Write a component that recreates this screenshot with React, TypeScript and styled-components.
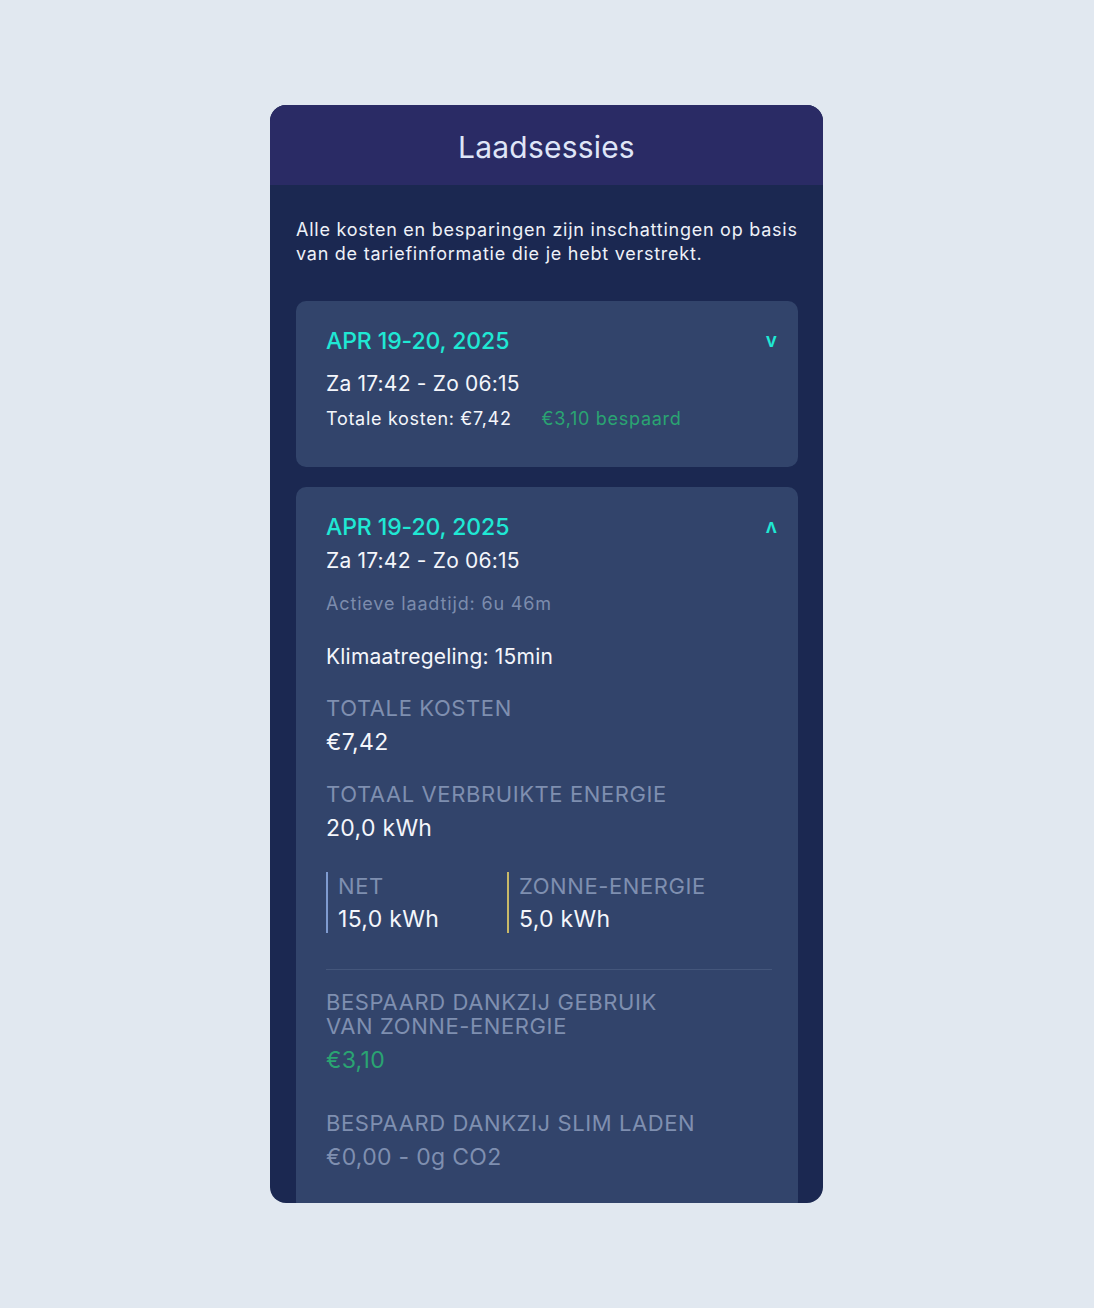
import React from "react";
import styled, { createGlobalStyle } from "styled-components";

const Global = createGlobalStyle`
  html, body { margin: 0; padding: 0; background: #e1e8f0; }
  body { font-family: Inter, "Noto Sans", "Liberation Sans", sans-serif; -webkit-font-smoothing: antialiased; }
  * { box-sizing: border-box; }
`;

const Page = styled.div`
  min-height: 1308px;
  display: flex;
  justify-content: flex-start;
  padding: 105px 0 0 270px;
`;

const Panel = styled.div`
  width: 553px;
  height: 1098px;
  border-radius: 16px;
  overflow: hidden;
  background: #1b2851;
  display: flex;
  flex-direction: column;
`;

const Header = styled.div`
  height: 80px;
  flex: none;
  background: #2a2b65;
  display: flex;
  align-items: center;
  justify-content: center;
  color: #dfe5f7;
  font-size: 30px;
  font-weight: 400;
  letter-spacing: 0.2px;
  padding-top: 4px;
`;

const Body = styled.div`
  padding: 33px 25px 0 26px;
  display: flex;
  flex-direction: column;
  gap: 20px;
`;

const Intro = styled.p`
  margin: 0 0 15px;
  color: #eef1f8;
  font-size: 18px;
  line-height: 24px;
  letter-spacing: 0.75px;
`;

const Card = styled.div<{ $open?: boolean }>`
  background: #32446b;
  border-radius: 10px;
  padding: ${(p) => (p.$open ? "26px 20px 40px 30px" : "26px 20px 36px 30px")};
  display: flex;
  flex-direction: column;
`;

const TopRow = styled.div`
  display: flex;
  justify-content: space-between;
  align-items: center;
`;

const DateText = styled.div`
  color: #1fe8d4;
  font-size: 23px;
  line-height: 28px;
  font-weight: 500;
  letter-spacing: -0.1px;
`;

const Chevron = styled.span`
  color: #1fe8d4;
  font-size: 19px;
  font-weight: 600;
  margin-right: 1px;
  line-height: 20px;
`;

const TimeText = styled.div<{ $mt: number }>`
  color: #f4f6fb;
  font-size: 21px;
  line-height: 26px;
  letter-spacing: 0.2px;
  margin-top: ${(p) => p.$mt}px;
`;

const SummaryRow = styled.div`
  display: flex;
  gap: 30px;
  margin-top: 10px;
  font-size: 18px;
  line-height: 24px;
  letter-spacing: 0.7px;
`;

const White = styled.span`
  color: #f4f6fb;
`;

const Green = styled.span`
  color: #2aa472;
`;

const Muted = styled.div<{ $mt: number }>`
  color: #7c8cad;
  font-size: 18px;
  line-height: 24px;
  letter-spacing: 0.85px;
  margin-top: ${(p) => p.$mt}px;
`;

const Label = styled.div<{ $mt: number }>`
  color: #7f8fb0;
  font-size: 22px;
  line-height: 24px;
  letter-spacing: 0.6px;
  text-transform: uppercase;
  margin-top: ${(p) => p.$mt}px;
`;

const Value = styled.div<{ $color?: string; $mt?: number }>`
  color: ${(p) => p.$color || "#f4f6fb"};
  font-size: 23px;
  line-height: 28px;
  letter-spacing: 0.3px;
  margin-top: ${(p) => p.$mt ?? 8}px;
`;

const Split = styled.div`
  display: flex;
  margin-top: 30px;
`;

const SplitCol = styled.div<{ $line: string; $w: number }>`
  width: ${(p) => p.$w}px;
  border-left: 2px solid ${(p) => p.$line};
  padding: 0 0 0 10px;
  display: flex;
  flex-direction: column;
`;

const Divider = styled.hr`
  border: none;
  border-top: 1px solid #44567b;
  margin: 36px 6px 0 0;
`;

export default function App() {
  return (
    <>
      <Global />
      <Page>
        <Panel>
          <Header>Laadsessies</Header>
          <Body>
            <Intro>
              Alle kosten en besparingen zijn inschattingen op basis van de tariefinformatie die je hebt verstrekt.
            </Intro>
            <Card>
              <TopRow>
                <DateText>APR 19-20, 2025</DateText>
                <Chevron>v</Chevron>
              </TopRow>
              <TimeText $mt={16}>Za 17:42 - Zo 06:15</TimeText>
              <SummaryRow>
                <White>Totale kosten: €7,42</White>
                <Green>€3,10 bespaard</Green>
              </SummaryRow>
            </Card>
            <Card $open>
              <TopRow>
                <DateText>APR 19-20, 2025</DateText>
                <Chevron>ʌ</Chevron>
              </TopRow>
              <TimeText $mt={7}>Za 17:42 - Zo 06:15</TimeText>
              <Muted $mt={18}>Actieve laadtijd: 6u 46m</Muted>
              <TimeText $mt={28}>Klimaatregeling: 15min</TimeText>
              <Label $mt={26}>Totale kosten</Label>
              <Value>€7,42</Value>
              <Label $mt={26}>Totaal verbruikte energie</Label>
              <Value>20,0 kWh</Value>
              <Split>
                <SplitCol $line="#7f9bd0" $w={181}>
                  <Label $mt={2}>Net</Label>
                  <Value $mt={7}>15,0 kWh</Value>
                </SplitCol>
                <SplitCol $line="#c8b968" $w={250}>
                  <Label $mt={2}>Zonne-energie</Label>
                  <Value $mt={7}>5,0 kWh</Value>
                </SplitCol>
              </Split>
              <Divider />
              <Label $mt={20}>
                Bespaard dankzij gebruik
                <br />
                van zonne-energie
              </Label>
              <Value $color="#2aa472" $mt={8}>€3,10</Value>
              <Label $mt={37}>Bespaard dankzij slim laden</Label>
              <Value $color="#7f8fb0" $mt={8}>€0,00 - 0g CO2</Value>
            </Card>
          </Body>
        </Panel>
      </Page>
    </>
  );
}
